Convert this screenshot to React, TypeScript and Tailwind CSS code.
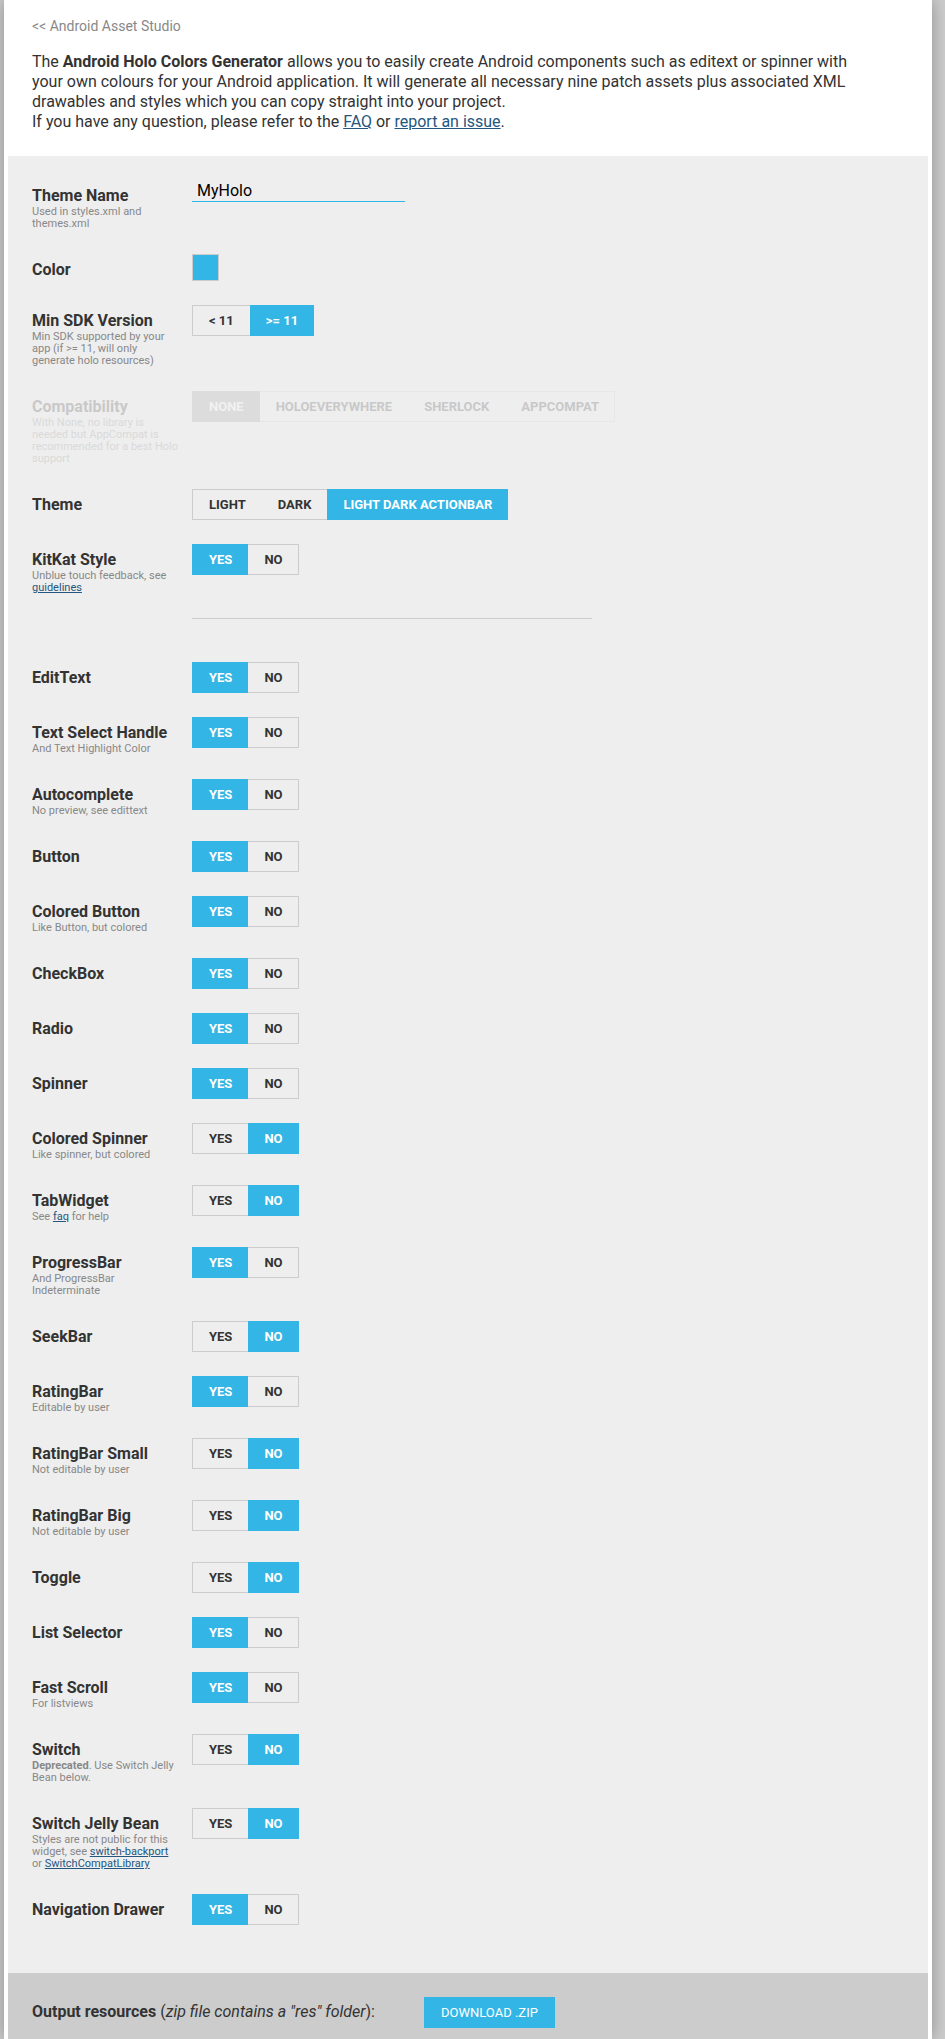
import { useState, type ReactNode } from 'react'

const BLUE_LINK = 'text-[#25567f] underline'

type Field = {
  label: string
  note?: ReactNode
  options?: string[]
  selected: string
}

const YES_NO = ['YES', 'NO']

const themeFields: Field[] = [
  {
    label: 'Theme',
    options: ['LIGHT', 'DARK', 'LIGHT DARK ACTIONBAR'],
    selected: 'LIGHT DARK ACTIONBAR',
  },
  {
    label: 'KitKat Style',
    note: (
      <>
        Unblue touch feedback, see{' '}
        <a href="#guidelines" className={BLUE_LINK}>guidelines</a>
      </>
    ),
    selected: 'YES',
  },
]

const widgetFields: Field[] = [
  { label: 'EditText', selected: 'YES' },
  { label: 'Text Select Handle', note: 'And Text Highlight Color', selected: 'YES' },
  { label: 'Autocomplete', note: 'No preview, see edittext', selected: 'YES' },
  { label: 'Button', selected: 'YES' },
  { label: 'Colored Button', note: 'Like Button, but colored', selected: 'YES' },
  { label: 'CheckBox', selected: 'YES' },
  { label: 'Radio', selected: 'YES' },
  { label: 'Spinner', selected: 'YES' },
  { label: 'Colored Spinner', note: 'Like spinner, but colored', selected: 'NO' },
  {
    label: 'TabWidget',
    note: (
      <>
        See <a href="#faq" className={BLUE_LINK}>faq</a> for help
      </>
    ),
    selected: 'NO',
  },
  { label: 'ProgressBar', note: 'And ProgressBar Indeterminate', selected: 'YES' },
  { label: 'SeekBar', selected: 'NO' },
  { label: 'RatingBar', note: 'Editable by user', selected: 'YES' },
  { label: 'RatingBar Small', note: 'Not editable by user', selected: 'NO' },
  { label: 'RatingBar Big', note: 'Not editable by user', selected: 'NO' },
  { label: 'Toggle', selected: 'NO' },
  { label: 'List Selector', selected: 'YES' },
  { label: 'Fast Scroll', note: 'For listviews', selected: 'YES' },
  {
    label: 'Switch',
    note: (
      <>
        <b>Deprecated</b>. Use Switch Jelly Bean below.
      </>
    ),
    selected: 'NO',
  },
  {
    label: 'Switch Jelly Bean',
    note: (
      <>
        Styles are not public for this widget, see{' '}
        <a href="#switch-backport" className={BLUE_LINK}>switch-backport</a> or{' '}
        <a href="#switch-compat" className={BLUE_LINK}>SwitchCompatLibrary</a>
      </>
    ),
    selected: 'NO',
  },
  { label: 'Navigation Drawer', selected: 'YES' },
]

function slug(label: string) {
  return label.toLowerCase().replace(/\s+/g, '-')
}

function Row({
  label,
  note,
  htmlFor,
  disabled,
  children,
}: {
  label: string
  note?: ReactNode
  htmlFor?: string
  disabled?: boolean
  children: ReactNode
}) {
  const heading = 'block text-base leading-5 font-bold'
  return (
    <div className={disabled ? 'flex items-start pb-6 opacity-20' : 'flex items-start pb-6'}>
      <div className="w-40 shrink-0 pt-1.5 pr-3">
        {htmlFor ? (
          <label htmlFor={htmlFor} className={heading}>{label}</label>
        ) : (
          <span id={`${slug(label)}-label`} className={heading}>{label}</span>
        )}
        {note && <div className="text-[11px] leading-3 text-[#888]">{note}</div>}
      </div>
      {children}
    </div>
  )
}

function Segmented({
  name,
  options,
  initial,
  disabled,
}: {
  name: string
  options: string[]
  initial: string
  disabled?: boolean
}) {
  const [value, setValue] = useState(initial)
  const on = disabled
    ? 'border-[#999] bg-[#999] text-white'
    : 'border-[#33b5e5] bg-[#33b5e5] text-white'
  return (
    <div role="radiogroup" aria-labelledby={`${slug(name)}-label`} className="flex h-[31px]">
      {options.map((option) => (
        <label
          key={option}
          className={`relative flex items-center border-y px-4 text-[13px] leading-4 font-bold first:border-l last:border-r last:pr-[15px] ${
            value === option ? on : 'border-[#ccc]'
          }`}
        >
          <input
            type="radio"
            name={slug(name)}
            checked={value === option}
            disabled={disabled}
            onChange={() => setValue(option)}
            className="sr-only"
          />
          {option}
        </label>
      ))}
    </div>
  )
}

function FieldRow({ field }: { field: Field }) {
  return (
    <Row label={field.label} note={field.note}>
      <Segmented name={field.label} options={field.options ?? YES_NO} initial={field.selected} />
    </Row>
  )
}

export default function App() {
  return (
    <div className="min-h-screen overflow-hidden bg-[#ccc] pr-[13px] pl-1 font-[Roboto,sans-serif] text-base leading-5 text-[#333]">
      <div className="bg-white px-1 shadow-[0_0_16px_rgba(0,0,0,0.3)]">
        <header className="px-6 pt-4 pb-6">
          <a href="#asset-studio" className="block text-sm leading-5 text-[#888]">
            &lt;&lt; Android Asset Studio
          </a>
          <p className="mt-4 max-w-[840px]">
            The <b>Android Holo Colors Generator</b> allows you to easily create Android components
            such as editext or spinner with your own colours for your Android application. It will
            generate all necessary nine patch assets plus associated XML drawables and styles which
            you can copy straight into your project.
            <br />
            If you have any question, please refer to the{' '}
            <a href="#faq" className={BLUE_LINK}>FAQ</a> or{' '}
            <a href="#issues" className={BLUE_LINK}>report an issue</a>.
          </p>
        </header>

        <main className="bg-[#eee] p-6">
          <Row label="Theme Name" note="Used in styles.xml and themes.xml" htmlFor="theme-name">
            <input
              id="theme-name"
              type="text"
              defaultValue="MyHolo"
              className="h-[22px] w-[213px] border-b border-[#33b5e5] bg-transparent px-[5px] text-base leading-5 text-black outline-none"
            />
          </Row>
          <Row label="Color">
            <button
              type="button"
              aria-labelledby="color-label"
              className="size-[27px] border border-[#ccc] bg-[#33b5e5]"
            />
          </Row>
          <Row
            label="Min SDK Version"
            note="Min SDK supported by your app (if >= 11, will only generate holo resources)"
          >
            <Segmented name="Min SDK Version" options={['< 11', '>= 11']} initial=">= 11" />
          </Row>
          <Row
            label="Compatibility"
            note="With None, no library is needed but AppCompat is recommended for a best Holo support"
            disabled
          >
            <Segmented
              name="Compatibility"
              options={['NONE', 'HOLOEVERYWHERE', 'SHERLOCK', 'APPCOMPAT']}
              initial="NONE"
              disabled
            />
          </Row>
          {themeFields.map((field) => (
            <FieldRow key={field.label} field={field} />
          ))}
          <hr className="mb-[43px] ml-40 max-w-[400px] border-[#ccc]" />
          {widgetFields.map((field) => (
            <FieldRow key={field.label} field={field} />
          ))}
        </main>

        <footer className="flex items-start bg-[#ccc] px-6 pt-6 pb-[11px]">
          <div className="w-[392px] pt-[5px]">
            <b>Output resources</b> (<i>zip file contains a "res" folder</i>):
          </div>
          <button type="button" className="h-[31px] bg-[#33b5e5] px-[17px] text-[13px] leading-4 text-white">
            DOWNLOAD .ZIP
          </button>
        </footer>
      </div>
    </div>
  )
}
